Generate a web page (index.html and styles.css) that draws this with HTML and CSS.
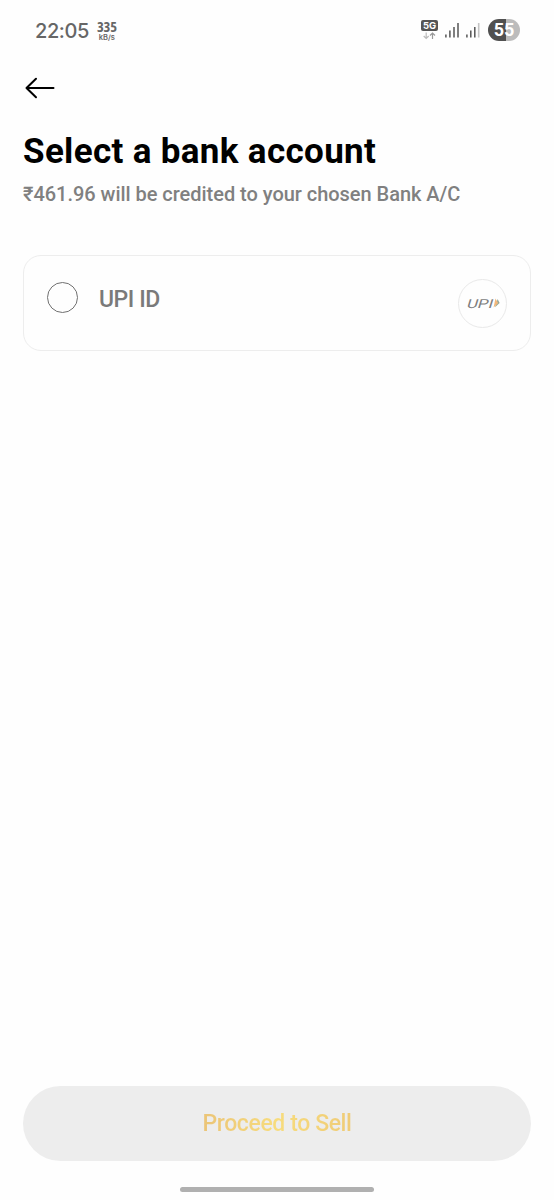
FILE: index.html
```html
<!DOCTYPE html>
<html lang="en">
<head>
<meta charset="utf-8">
<meta name="viewport" content="width=device-width">
<title>Select a bank account</title>
<link rel="stylesheet" href="styles.css">
</head>
<body>
<div class="screen">
  <div class="status">
    <span class="time">22:05</span>
    <span class="speed"><b>335</b><small>kB/s</small></span>
    <svg class="signals" width="60" height="20" viewBox="0 0 60 20">
      <rect x="1" y="0" width="17" height="11" rx="2" fill="#555"/>
      <text class="net" x="9.5" y="9.2" text-anchor="middle">5G</text>
      <path d="M6.2 12.500v6M3.700 16l2.500 2.500L8.700 16" fill="none" stroke="#bbb" stroke-width="1.200"/>
      <path d="M12.500 19v-6M10 15.500l2.500-2.500 2.500 2.500" fill="none" stroke="#999" stroke-width="1.200"/>
      <path d="M25.900 17.500v-3M29.900 17.500v-7M34 17.500v-10.500M38 17.500v-14.500M46.900 17.500v-3M50.800 17.500v-7M54.800 17.500v-10.500" stroke="#555" stroke-width="1.500"/>
      <path d="M58.700 17.500v-14.500" stroke="#c4c4c4" stroke-width="1.600"/>
    </svg>
    <span class="battery">55</span>
  </div>
  <header class="nav">
    <svg width="30" height="22" viewBox="0 0 30 22" fill="none" stroke="#000" stroke-width="2" stroke-linecap="round" stroke-linejoin="round"><path d="M1.500 11h27M11 1.800L1.500 11l9.500 9.200"/></svg>
  </header>
  <main class="content">
    <h1 class="title">Select a bank account</h1>
    <p class="subtitle">₹461.96 will be credited to your chosen Bank A/C</p>
    <div class="card">
      <span class="radio"></span>
      <span class="label">UPI ID</span>
      <span class="badge">
        <svg width="36" height="16" viewBox="0 0 36 16">
          <text class="upi" transform="translate(1 12.500) skewX(-17)" textLength="26" lengthAdjust="spacingAndGlyphs">UPI</text>
          <path d="M32.600 4l2 4-4.600 4.300z" fill="#94a89a"/>
          <path d="M30.400 3.600l2.800 4.400-4.600 4.500z" fill="#f2b77b"/>
        </svg>
      </span>
    </div>
  </main>
  <button class="proceed"><span>Proceed to Sell</span></button>
  <div class="homebar"></div>
</div>
</body>
</html>
```
FILE: styles.css
```css
* { box-sizing: border-box; }
body { margin: 0; background: #fefefe; font-family: Roboto, sans-serif; }
.screen { height: 1200px; display: flex; flex-direction: column; }
.status { height: 60px; padding: 0 34px 0 35px; display: flex; align-items: center; color: #666; }
.time { font: 500 20px/24px Inter, sans-serif; letter-spacing: -.4px; padding-top: 1px; }
.speed { margin-left: 8px; padding-top: 2px; display: flex; flex-direction: column; align-items: center; }
.speed b { font: 700 14.5px/13px "Open Sans", sans-serif; font-stretch: 75%; letter-spacing: -.2px; }
.speed small { font: 600 7.5px/9px Inter, sans-serif; }
.signals { margin-left: auto; }
.net { font: 700 9.5px Inter, sans-serif; fill: #fff; }
.battery { margin-left: 8px; width: 32px; height: 22px; border-radius: 11px; background: linear-gradient(90deg, #505050 55%, #bcbcbc 55%); color: #fff; font: 700 18px/22px Roboto, sans-serif; text-align: center; }
.nav { height: 56px; padding: 17px 25px; }
.nav svg { display: block; }
.content { flex: 1; padding: 0 23px; }
.title { margin: 15px 0 0; font-size: 35px; line-height: 42px; font-weight: 700; letter-spacing: .33px; color: #000; white-space: nowrap; }
.subtitle { margin: 9px 0 0; font-size: 20px; line-height: 24px; font-weight: 500; letter-spacing: -.03px; color: #808080; white-space: nowrap; }
.card { margin-top: 49px; height: 96px; padding: 0 23px; border: 1px solid #ededed; border-radius: 18px; display: flex; align-items: center; }
.radio { width: 31px; height: 31px; border: 1px solid #707070; border-radius: 50%; margin-bottom: 12px; }
.label { margin: 0 0 7px 21px; font-size: 23px; line-height: 28px; font-weight: 500; letter-spacing: -.45px; color: #7a7a7a; }
.badge { margin-left: auto; width: 49px; height: 49px; border: 1px solid #e9e9e9; border-radius: 50%; display: grid; place-items: center; }
.upi { font: 400 12.5px Roboto, sans-serif; fill: #7d7d7d; }
.proceed { margin: 0 23px; height: 75px; border: 0; border-radius: 38px; background: #ededed; font: 500 23px/28px Roboto, sans-serif; letter-spacing: -.4px; }
.proceed span { background: linear-gradient(90deg, #ebc477, #f7dc7d 50%, #efcb77); background-clip: text; -webkit-background-clip: text; color: transparent; }
.homebar { margin: 26px auto 8px; width: 194px; height: 5px; border-radius: 3px; background: #b0b0b0; }
```
